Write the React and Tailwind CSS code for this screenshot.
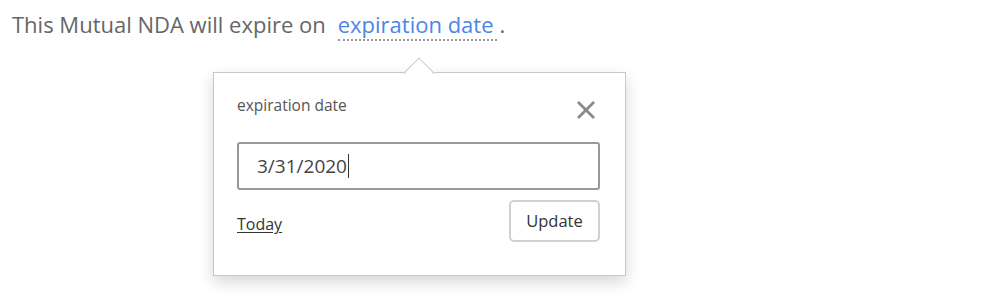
import React from "react";

export default function App() {
  return (
    <div className="w-[991px] h-[302px] bg-white overflow-hidden" style={{ fontFamily: '"Open Sans", "Liberation Sans", sans-serif' }}>
      <div className="pl-[12px] pt-[9px] text-[22px] leading-[30px] text-[#666] whitespace-nowrap">
        This Mutual NDA will expire on
        <span className="ml-[12px] text-[#4a86e8] border-b-2 border-dotted border-[#9a9a9a] pb-0 pr-[3px]">expiration date</span>
        <span className="ml-[3px]">.</span>
      </div>
      <div className="relative ml-[213px] mt-[33px] w-[413px] h-[204px] bg-white border border-[#c8c8c8] shadow-[0_6px_14px_rgba(0,0,0,0.16)] pl-[23px] pr-[25px] pt-[20px]">
        <div className="absolute left-[189px] -top-[16px] w-[32px] h-[17px] overflow-hidden">
          <div className="absolute left-[5px] top-[5px] w-[22px] h-[22px] bg-white border border-[#c8c8c8] rotate-45"></div>
        </div>
        <div className="flex items-start justify-between h-[26px]">
          <div className="text-[15.5px] leading-[24px] text-[#555] font-medium">expiration date</div>
          <button className="mt-[8px] mr-[5px] text-[#8a8a8a]">
            <svg width="18" height="18" viewBox="0 0 18 18" className="block">
              <path d="M2 2 L16 16 M16 2 L2 16" stroke="currentColor" strokeWidth="2.8" strokeLinecap="square" />
            </svg>
          </button>
        </div>
        <div className="mt-[23px] h-[48px] border-2 border-[#999] rounded-[3px] flex items-center pl-[18px] text-[19px] text-[#444]">
          3/31/2020<span className="inline-block w-px h-[24px] bg-[#333] ml-[1px]"></span>
        </div>
        <div className="mt-[10px] flex items-start justify-between">
          <a className="mt-[12px] text-[16px] leading-[24px] text-[#333] underline underline-offset-2">Today</a>
          <button className="w-[91px] h-[42px] border-2 border-[#d0d0d0] rounded-[5px] text-[16.5px] text-[#333] bg-white">Update</button>
        </div>
      </div>
    </div>
  );
}
